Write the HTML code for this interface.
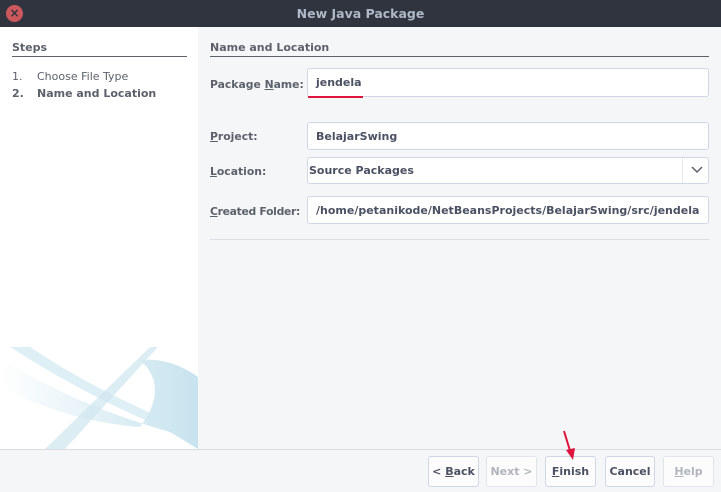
<!DOCTYPE html>
<html><head><style>
*{margin:0;padding:0;box-sizing:border-box}
body{width:721px;height:492px;overflow:hidden;font-family:"DejaVu Sans","Liberation Sans",sans-serif;font-size:11px;color:#5c616c;background:#f5f6f7;position:relative}
.a{position:absolute}
.title{left:0;top:0;width:721px;height:27px;background:#2f343f;color:#afb8c6;font-weight:bold;font-size:12.5px;text-align:center;line-height:28px}
.close{left:6px;top:5px;width:17px;height:17px;border-radius:50%;background:#cc575d;color:#2f343f;font-size:12px;line-height:17px;text-align:center;font-weight:bold}
.left{left:0;top:27px;width:198px;height:422px;background:#fff}
.inp{background:#fff;border:1px solid #cfd6e6;border-radius:3px;height:29px;line-height:27px;padding-left:8px;font-weight:bold;color:#4b5162;white-space:nowrap}
.lbl{font-weight:bold;color:#5c616c;white-space:nowrap}
.lb2{font-size:10.8px}
.btn{top:456px;height:31px;border:1px solid #cfd6e6;border-radius:3px;background:#fcfcfd;text-align:center;line-height:29px;font-weight:bold;color:#4b5162}
.dis{color:#b0b4bc;border-color:#e0e4ec}
u{text-decoration:underline}
</style></head><body>
<div class="a title">New Java Package</div>
<div class="a close">×</div>
<div class="a left">
<svg class="a" style="left:0;top:320px" width="198" height="102" viewBox="0 0 198 102">
<defs><linearGradient id="g" x1="0" x2="1"><stop offset="0" stop-color="#fff"/><stop offset="1" stop-color="#b9dcea"/></linearGradient></defs>
<path d="M0 12 Q80 60 170 85 L198 102 L198 30 Q170 10 140 13 Q170 40 140 80 Q70 75 0 40Z" fill="url(#g)" opacity=".8"/>
<path d="M10 0 L30 0 Q90 40 160 70 L150 75 Q80 45 10 0Z" fill="#d0e8f2" opacity=".7"/>
<path d="M45 102 L150 0 L158 0 L65 102Z" fill="#cfe6f0" opacity=".7"/>
</svg>
</div>
<div class="a lbl" style="left:12px;top:41px">Steps</div>
<div class="a" style="left:12px;top:56px;width:175px;height:1px;background:#5c616c"></div>
<div class="a" style="left:12px;top:70px">1.</div><div class="a" style="left:37px;top:70px">Choose File Type</div>
<div class="a lbl" style="left:12px;top:87px">2.</div><div class="a lbl" style="left:37px;top:87px">Name and Location</div>
<div class="a lbl" style="left:210px;top:41px">Name and Location</div>
<div class="a" style="left:210px;top:56px;width:499px;height:1px;background:#5c616c"></div>
<div class="a lbl lb2" style="left:210px;top:78px">Package <u>N</u>ame:</div>
<div class="a inp" style="left:307px;top:68px;width:402px">jendela</div>
<div class="a" style="left:308px;top:96px;width:55px;height:2px;background:#e0143c"></div>
<div class="a lbl lb2" style="left:210px;top:130px"><u>P</u>roject:</div>
<div class="a inp" style="left:307px;top:122px;width:402px;height:28px">BelajarSwing</div>
<div class="a lbl lb2" style="left:210px;top:165px"><u>L</u>ocation:</div>
<div class="a inp" style="left:307px;top:157px;width:402px;height:27px;padding-left:1px;line-height:25px">Source Packages</div>
<div class="a" style="left:682px;top:158px;width:1px;height:25px;background:#e6e9ee"></div>
<svg class="a" style="left:691px;top:166px" width="12" height="8"><path d="M1 1 L6 6 L11 1" stroke="#5c616c" stroke-width="1.5" fill="none"/></svg>
<div class="a lbl lb2" style="left:210px;top:205px;letter-spacing:-0.3px"><u>C</u>reated Folder:</div>
<div class="a inp" style="left:307px;top:196px;width:402px;height:28px">/home/petanikode/NetBeansProjects/BelajarSwing/src/jendela</div>
<div class="a" style="left:210px;top:239px;width:499px;height:1px;background:#dcdfe3"></div>
<div class="a" style="left:0;top:449px;width:721px;height:1px;background:#d8dbe0"></div>
<div class="a btn" style="left:428px;width:51px">&lt; <u>B</u>ack</div>
<div class="a btn dis" style="left:486px;width:51px">Next &gt;</div>
<div class="a btn" style="left:545px;width:51px"><u>F</u>inish</div>
<div class="a btn" style="left:605px;width:50px">Cancel</div>
<div class="a btn dis" style="left:663px;width:51px"><u>H</u>elp</div>
<svg class="a" style="left:558px;top:428px" width="20" height="34"><path d="M6 3 L13 26" stroke="#e0143c" stroke-width="2"/><path d="M8 22 L15 32 L17 20Z" fill="#e0143c"/></svg>
</body></html>
